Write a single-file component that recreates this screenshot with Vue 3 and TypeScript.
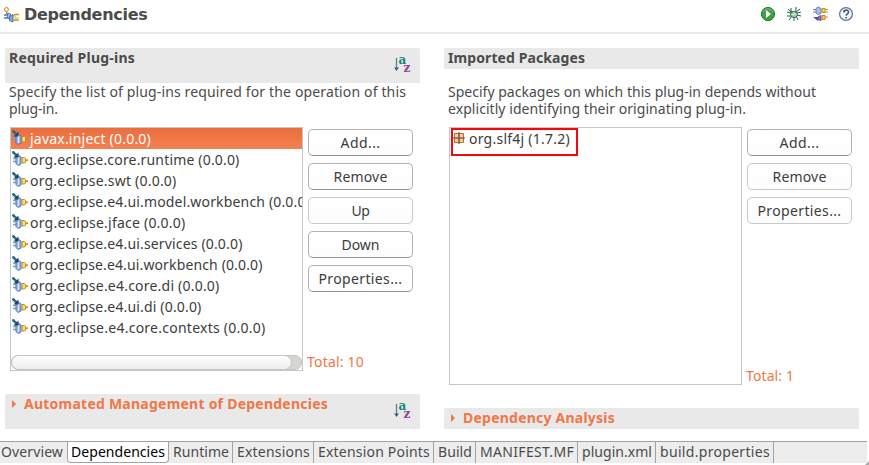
<script setup lang="ts">
interface Entry { text: string; width: number }
interface Action extends Entry { tone: string }
interface Tab extends Entry { span: number; active?: boolean }

// Spreads a label's letters so that it takes up the given width.
const vFit = {
  mounted(el: HTMLElement, binding: { value: number }) {
    const count = (el.textContent ?? '').length
    const natural = el.getBoundingClientRect().width
    el.style.letterSpacing = `${(binding.value - natural) / count}px`
  },
}

const plugins: Entry[] = [
  { text: 'javax.inject (0.0.0)', width: 121 },
  { text: 'org.eclipse.core.runtime (0.0.0)', width: 209.500 },
  { text: 'org.eclipse.swt (0.0.0)', width: 146.500 },
  { text: 'org.eclipse.e4.ui.model.workbench (0.0.0)', width: 280 },
  { text: 'org.eclipse.jface (0.0.0)', width: 155.500 },
  { text: 'org.eclipse.e4.ui.services (0.0.0)', width: 212.500 },
  { text: 'org.eclipse.e4.ui.workbench (0.0.0)', width: 232.500 },
  { text: 'org.eclipse.e4.core.di (0.0.0)', width: 189.500 },
  { text: 'org.eclipse.e4.ui.di (0.0.0)', width: 171.500 },
  { text: 'org.eclipse.e4.core.contexts (0.0.0)', width: 235.500 },
]
const pluginActions: Action[] = [
  { text: 'Add...', width: 40, tone: 'strong' },
  { text: 'Remove', width: 54, tone: 'strong' },
  { text: 'Up', width: 18, tone: 'soft' },
  { text: 'Down', width: 38, tone: 'strong' },
  { text: 'Properties...', width: 84, tone: 'strong' },
]
const packageActions: Action[] = [
  { text: 'Add...', width: 40, tone: 'strong' },
  { text: 'Remove', width: 54, tone: 'soft' },
  { text: 'Properties...', width: 84, tone: 'soft' },
]
const tabs: Tab[] = [
  { text: 'Overview', width: 62, span: 67 },
  { text: 'Dependencies', width: 94, span: 102, active: true },
  { text: 'Runtime', width: 56, span: 64 },
  { text: 'Extensions', width: 73, span: 81 },
  { text: 'Extension Points', width: 112, span: 120 },
  { text: 'Build', width: 34, span: 42 },
  { text: 'MANIFEST.MF', width: 94, span: 102 },
  { text: 'plugin.xml', width: 70, span: 78 },
  { text: 'build.properties', width: 110, span: 118 },
]
</script>

<template>
  <div class="editor">
    <svg class="symbols" aria-hidden="true">
      <defs>
        <symbol id="plug" viewBox="0 0 16 16">
          <path d="M1 7.500h3M1 10.500h3" stroke="#7fa0d6" stroke-width="1.400" />
          <path d="M4 5.500l2-1.500 3 2v7l-3 1.500-2-2z" fill="#9db9e8" stroke="#4f74b4" />
          <path d="M6.500 6v7" stroke="#dce8fb" />
          <path d="M10 6.500h2.500l1 1v3.500l-1 1H10z" fill="#f9dc7c" stroke="#bf8f1c" />
          <path d="M13.500 9.200h2.500" stroke="#c9991f" stroke-width="1.800" />
          <path d="M.5.500l5 5" stroke="#1c5a76" stroke-width="2.400" />
          <path d="M6.500 1.500v5h-5z" fill="#174b66" />
          <path d="M0 2.500l2-2M2 4.500l2-2" stroke="#4fa9bb" stroke-width=".8" />
        </symbol>
        <symbol id="sort" viewBox="0 0 18 18">
          <path d="M3.500 2v11" stroke="#537c9c" stroke-width="1.300" />
          <path d="M1 11.500h5L3.500 15z" fill="#315f89" />
          <text x="5.500" y="8" font-family="DejaVu Serif" font-size="12" font-weight="bold" fill="#16877c">a</text>
          <text x="10.500" y="16" font-family="DejaVu Serif" font-size="12" font-weight="bold" fill="#8d4595">z</text>
        </symbol>
      </defs>
    </svg>

    <header class="heading">
      <svg class="logo" viewBox="0 0 16 16">
        <path d="M1 8h4M1 11h5" stroke="#5378b5" stroke-width="1.400" />
        <path d="M4.500 6l3 1v5.500l-3-1.500z" fill="#9ab5e2" stroke="#5378b5" />
        <path d="M6.500 9.500l3.500-2v7.500l-3.500-1.500z" fill="#82a8dc" stroke="#456fae" />
        <path d="M3.500 4.500v3" stroke="#b98a52" />
        <circle cx="3.500" cy="2.500" r="2" fill="#fff2d0" stroke="#d48717" />
        <path d="M10 9l2-1.500h4M11 13h5" fill="none" stroke="#bb901f" stroke-width="1.400" />
        <path d="M12 8.500v2.500h3v2" fill="none" stroke="#efce65" stroke-width="1.600" />
      </svg>
      <h1><span v-fit="123.5">Dependencies</span></h1>
      <div class="tools">
        <svg viewBox="0 0 16 16">
          <circle cx="8" cy="8" r="6.600" fill="#3f9f48" stroke="#207a35" />
          <path d="M3 6a5.500 5.500 0 0 1 10 0" fill="none" stroke="#7cc274" />
          <path d="M6 4l5 4-5 4z" fill="#fff" />
        </svg>
        <svg viewBox="0 0 16 16">
          <path d="M5 2v3l2 1M10 1v3L9 6M1 6l4 1M1 10h4M3 14l3-4M8 15v-4M12 14l-2-4M15 10l-4-1M15 6l-4 1M2 3l4 4M14 3l-4 3" fill="none" stroke="#24584f" />
          <ellipse cx="8" cy="8.500" rx="3.500" ry="3" fill="#a8d8a6" stroke="#2c695a" />
          <path d="M6.500 8.500l3-1" stroke="#e2f5c8" />
        </svg>
        <svg viewBox="0 0 16 16">
          <path d="M1 3.500h3M1 6h3" stroke="#6083bd" />
          <path d="M4 2.500l2-1.500 3 1.500v5L6 8.500 4 7z" fill="#a4bfe8" stroke="#6083bd" />
          <path d="M10 2.500h3v4h-3zM13 3.500h3M13 6h3" fill="#f4cf65" stroke="#c98f22" />
          <path d="M1 11h5v4z" fill="#245caa" />
          <path d="M6 11l3-1.500v5l-3-1z" fill="#a468c5" stroke="#7941a2" />
          <path d="M10 9.500h3v4h-3zM13 11h3" fill="#f4cf65" stroke="#c98325" />
        </svg>
        <svg viewBox="0 0 16 16">
          <circle cx="8" cy="8" r="6.400" fill="#f8faff" stroke="#607595" stroke-width="1.300" />
          <path d="M5.800 6.500C5.800 3.500 10.500 3.500 10.500 6.200C10.500 8 8.200 7.800 8.200 9.800M8.200 11v1.500" fill="none" stroke="#425b84" stroke-width="1.700" />
        </svg>
      </div>
    </header>

    <main class="columns">
      <section class="column">
        <div class="bar tall">
          <h2><span v-fit="126">Required Plug-ins</span></h2>
          <svg class="sort"><use href="#sort" /></svg>
        </div>
        <p class="intro">
          <span v-fit="397">Specify the list of plug-ins required for the operation of this</span>
          <span v-fit="49">plug-in.</span>
        </p>
        <div class="content">
          <div class="list short">
            <ul>
              <li v-for="(item, index) in plugins" :key="item.text" :class="{ selected: index === 0 }">
                <svg class="item-icon"><use href="#plug" /></svg>
                <span v-fit="item.width">{{ item.text }}</span>
              </li>
            </ul>
            <div class="scroll"><div class="thumb"></div></div>
          </div>
          <div class="side">
            <button v-for="action in pluginActions" :key="action.text" :class="action.tone">
              <span v-fit="action.width">{{ action.text }}</span>
            </button>
            <div class="total"><span v-fit="57">Total: 10</span></div>
          </div>
        </div>
        <div class="bar tall link lower">
          <i class="twist"></i>
          <h2><span v-fit="304">Automated Management of Dependencies</span></h2>
          <svg class="sort"><use href="#sort" /></svg>
        </div>
      </section>

      <section class="column">
        <div class="bar">
          <h2><span v-fit="137">Imported Packages</span></h2>
        </div>
        <p class="intro spaced">
          <span v-fit="368">Specify packages on which this plug-in depends without</span>
          <span v-fit="298">explicitly identifying their originating plug-in.</span>
        </p>
        <div class="content">
          <div class="list long">
            <ul>
              <li>
                <svg class="item-icon" viewBox="0 0 16 16">
                  <path d="M3.500 3.500h9v9h-9z" fill="#ddb17a" stroke="#a8714a" />
                  <path d="M4 4h3v3H4zM9 4h3v3H9zM4 9h3v3H4zM9 9h3v3H9z" fill="#f1d19a" />
                  <path d="M8 2v12M2 8h12" stroke="#81462d" stroke-width="1.200" />
                </svg>
                <span v-fit="101">org.slf4j (1.7.2)</span>
              </li>
            </ul>
            <div class="callout"></div>
          </div>
          <div class="side">
            <button v-for="action in packageActions" :key="action.text" :class="action.tone">
              <span v-fit="action.width">{{ action.text }}</span>
            </button>
            <div class="total"><span v-fit="48">Total: 1</span></div>
          </div>
        </div>
        <div class="bar link lower">
          <i class="twist"></i>
          <h2><span v-fit="152">Dependency Analysis</span></h2>
        </div>
      </section>
    </main>

    <footer class="footer">
      <nav class="tabs">
        <div v-for="tab in tabs" :key="tab.text" class="tab" :class="{ active: tab.active }" :style="{ width: tab.span + 'px' }">
          <span v-fit="tab.width">{{ tab.text }}</span>
        </div>
      </nav>
      <svg class="grip" viewBox="0 0 5 5"><path d="M0 5l5-5v5z" fill="#aaa" /></svg>
    </footer>
  </div>
</template>

<style>
body { background: #fff; overflow: hidden; }
</style>

<style scoped>
* { box-sizing: border-box; }
.editor {
  width: 869px; height: 465px; display: flex; flex-direction: column;
  font: 14px/17px "Noto Sans", "Open Sans", sans-serif; color: #3c3c3c; background: #fff;
}
.symbols { position: absolute; width: 0; height: 0; }
span { white-space: pre; }
h1, h2, p, ul { margin: 0; padding: 0; }
.heading { height: 34px; flex: none; display: flex; align-items: flex-start; padding: 0 15px 0 3px; border-bottom: 2px solid #e8e8e8; }
.logo { width: 16px; height: 16px; margin: 7px 5px 0 0; }
h1 { font: bold 16px/20px "DejaVu Sans", sans-serif; color: #4b4b4b; padding-top: 5px; }
.tools { display: flex; gap: 10px; margin: 6px 0 0 auto; }
.tools svg { width: 16px; height: 16px; }
.columns { display: flex; gap: 24px; padding: 14px 10px 0 5px; height: 407px; flex: none; }
.column { width: 415px; flex: none; display: flex; flex-direction: column; height: 381px; }
.bar { height: 21px; flex: none; display: flex; align-items: flex-start; padding-left: 4px; background: #e9e9e9; border-radius: 2px 2px 0 0; }
.tall { height: 35px; }
.bar h2 { font-size: 14px; line-height: 20px; font-weight: 700; color: #4b4b4b; }
.sort { width: 18px; height: 18px; margin: 8px 9px 0 auto; }
.intro { font-size: 14px; line-height: 17px; color: #4b4b4b; padding: 0 0 0 4px; height: 44px; flex: none; }
.intro span { display: block; width: fit-content; }
.intro.spaced { height: 58px; padding-top: 14px; }
.content { display: flex; padding-left: 5px; gap: 5px; }
.list { width: 293px; border: 1px solid #c6c6c6; background: #fff; flex: none; display: flex; flex-direction: column; }
.short { height: 244px; }
.long { height: 258px; position: relative; }
ul { list-style: none; overflow: hidden; flex: 1; }
li { height: 21px; display: flex; align-items: center; padding-left: 1px; gap: 2px; }
li.selected { background: linear-gradient(#e96e3d, #f58150); color: #fff; }
.item-icon { width: 16px; height: 16px; flex: none; margin-top: -1px; }
.scroll { height: 15px; background: #d6d5d3; border: 1px solid #c9c8c5; border-radius: 7px; }
.thumb { width: 279px; height: 13px; border-radius: 7px; background: linear-gradient(#fefefe, #ececea); box-shadow: 0 0 0 1px #c6c5c1; }
.callout { position: absolute; left: 1px; top: 0; width: 127px; height: 28px; border: 2px solid #f5080c; }
.side { width: 106px; display: flex; flex-direction: column; gap: 7px; padding-top: 2px; }
button { width: 105px; height: 27px; margin: 0; padding: 0; font: inherit; color: #3c3c3c; background: linear-gradient(#fff, #fdfdfd); border: 1px solid #b1b1b1; border-bottom-color: #929292; border-radius: 5px; }
button.soft { border-color: #c8c8c8; }
.total { margin: auto 0 0 -1px; color: #f07746; line-height: 18px; }
.lower { margin-top: auto; }
.link { padding-left: 7px; }
.link h2 { color: #f07746; }
.twist { width: 0; height: 0; border-left: 4px solid #f07746; border-top: 4px solid transparent; border-bottom: 4px solid transparent; margin: 6px 8px 0 0; }
.footer { height: 24px; display: flex; align-items: flex-start; }
.tabs { width: 867px; height: 22px; background: #ededed; border-top: 1px solid #a3a3a3; display: flex; }
.tab { flex: none; height: 21px; padding-left: 4px; line-height: 20px; color: #4b4b4b; border-right: 1px solid #a3a3a3; }
.tab:first-child { padding-left: 1px; border-right: 0; }
.tab.active { background: #fff; color: #000; border: 1px solid #a3a3a3; border-top: 0; border-radius: 0 0 4px 4px; padding-left: 3px; }
.grip { width: 4px; height: 4px; margin: 20px 0 0 -2px; flex: none; }
</style>
